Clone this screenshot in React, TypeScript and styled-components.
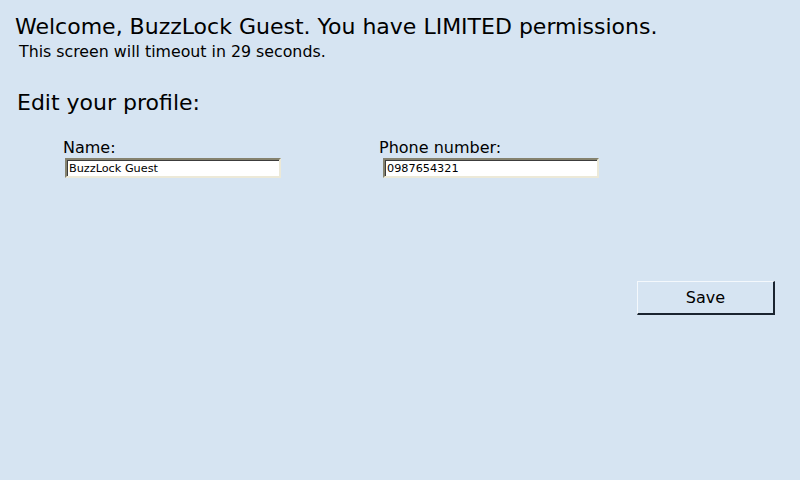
import styled, { createGlobalStyle } from 'styled-components';

const GlobalStyle = createGlobalStyle`
  html, body {
    margin: 0;
    padding: 0;
    background: #d6e4f2;
  }
  body {
    font-family: "DejaVu Sans", sans-serif;
    color: #000;
  }
`;

const Screen = styled.div`
  width: 800px;
  height: 480px;
  box-sizing: border-box;
  background: #d6e4f2;
  padding: 12px 0 0 15px;
  display: flex;
  flex-direction: column;
`;

const Title = styled.div`
  font-size: 22px;
  line-height: 30px;
  color: #000;
`;

const Timeout = styled.div`
  font-size: 15.8px;
  line-height: 20px;
  margin-left: 4px;
  color: #000;
`;

const Heading = styled.div`
  font-size: 22px;
  line-height: 26px;
  margin: 28px 0 0 2px;
`;

const FieldRow = styled.div`
  display: flex;
  margin: 22px 0 0 48px;
  gap: 98px;
`;

const Field = styled.div`
  display: flex;
  flex-direction: column;
`;

const Label = styled.div`
  font-size: 16px;
  line-height: 20px;
`;

const Input = styled.input<{ $indent: number }>`
  width: 216px;
  height: 20px;
  box-sizing: border-box;
  margin: 0 0 0 ${(p) => p.$indent}px;
  padding: 0 0 0 2px;
  font-family: "DejaVu Sans", sans-serif;
  font-size: 11.25px;
  color: #000;
  background: #fff;
  border-style: solid;
  border-width: 2px;
  border-color: #85826f #ece9d8 #ece9d8 #85826f;
  box-shadow: inset 1px 1px 0 #3c3c3c;
  outline: none;
`;

const Actions = styled.div`
  display: flex;
  justify-content: flex-end;
  padding-right: 25px;
  margin-top: 103px;
`;

const Button = styled.button`
  width: 138px;
  height: 34px;
  box-sizing: border-box;
  background: #d6e4f2;
  font-family: "DejaVu Sans", sans-serif;
  font-size: 16px;
  color: #000;
  border-style: solid;
  border-width: 1px 2px 2px 1px;
  border-color: #f4f8fc #1a2430 #1a2430 #f4f8fc;
  padding: 0;
`;

export default function App() {
  return (
    <>
      <GlobalStyle />
      <Screen>
        <Title>Welcome, BuzzLock Guest. You have LIMITED permissions.</Title>
        <Timeout>This screen will timeout in 29 seconds.</Timeout>
        <Heading>Edit your profile:</Heading>
        <FieldRow>
          <Field>
            <Label>Name:</Label>
            <Input $indent={2} defaultValue="BuzzLock Guest" />
          </Field>
          <Field>
            <Label>Phone number:</Label>
            <Input $indent={4} defaultValue="0987654321" />
          </Field>
        </FieldRow>
        <Actions>
          <Button>Save</Button>
        </Actions>
      </Screen>
    </>
  );
}
